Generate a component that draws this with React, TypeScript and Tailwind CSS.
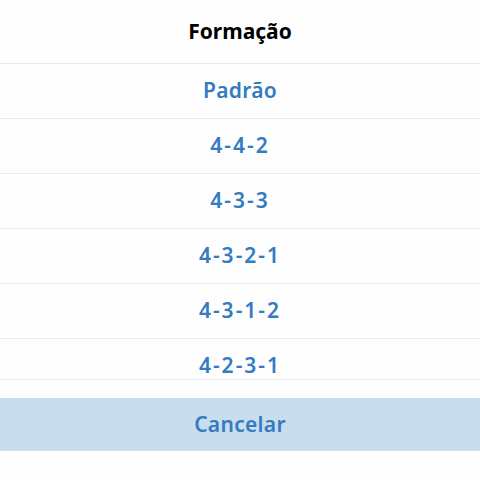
const options = ["Padrão", "4-4-2", "4-3-3", "4-3-2-1", "4-3-1-2", "4-2-3-1"];

export default function App() {
  return (
    <div className="h-[480px] w-[480px] overflow-hidden bg-[#fefefe] font-['Noto_Sans',sans-serif]">
      <div className="flex h-16 items-center justify-center border-b border-[#e6e6e6]">
        <h1 className="text-[21px] font-bold text-black">Formação</h1>
      </div>

      <ul className="h-[316px] overflow-hidden border-b border-[#ececec]">
        {options.map((opt) => (
          <li
            key={opt}
            className={
              "flex h-[55px] shrink-0 items-center justify-center border-b border-[#ececec] text-[21px] font-semibold text-[#347bc2] " +
              (opt === "Padrão" ? "tracking-[0.3px]" : "tracking-[2px]")
            }
          >
            {opt}
          </li>
        ))}
      </ul>

      <div className="mt-[18px] flex h-[53px] items-center justify-center bg-[#c8ddee]">
        <span className="text-[21px] font-semibold tracking-[0.3px] text-[#347bc2]">Cancelar</span>
      </div>
    </div>
  );
}
